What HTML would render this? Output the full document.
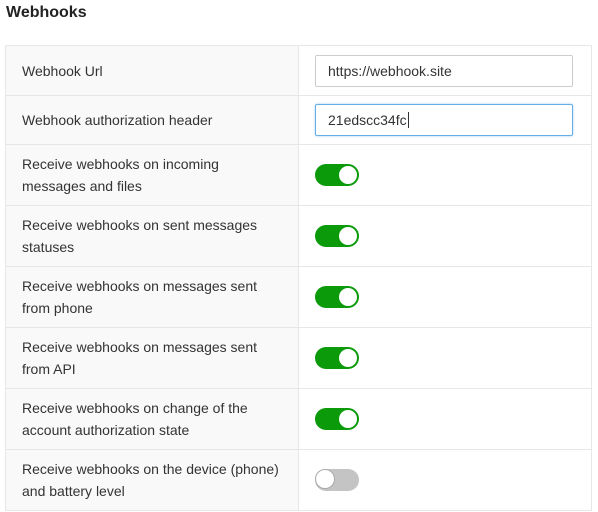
<!DOCTYPE html>
<html><head><style>
body{margin:0;background:#fff;font-family:"Liberation Sans",Arial,sans-serif;color:#333;width:598px;height:512px;overflow:hidden;position:relative}
h3{position:absolute;left:6px;top:4px;margin:0;font-size:16px;font-weight:bold;color:#222}
.t{position:absolute;left:5px;top:45px;width:585px;border:1px solid #e7e7e7;border-bottom:none}
.r{display:flex;border-bottom:1px solid #e7e7e7}
.l{width:276px;background:#f9f9f9;border-right:1px solid #e7e7e7;padding:0 0 0 16px;display:flex;align-items:center;font-size:14px;line-height:22px}
.v{flex:1;display:flex;align-items:center;padding-left:16px}
.in{width:244px;height:30px;border:1px solid #ccc;border-radius:2px;font-size:14px;padding-left:12px;line-height:30px;color:#333}
.in.f{border-color:#66afe9;box-shadow:0 0 2px rgba(102,175,233,.6)}
.sw{width:44px;height:22px;border-radius:11px;background:#0a9a0a;position:relative}
.sw::after{content:"";position:absolute;right:2px;top:2px;width:18px;height:18px;border-radius:50%;background:#fff}
.sw.off{background:#c4c4c4}
.sw.off::after{left:0;top:0;width:20px;height:20px;border:1px solid #aaa;box-sizing:border-box}
</style></head><body>
<h3>Webhooks</h3>
<div class="t">
<div class="r" style="height:49px"><div class="l">Webhook Url</div><div class="v"><div class="in">https://webhook.site</div></div></div>
<div class="r" style="height:48px"><div class="l">Webhook authorization header</div><div class="v"><div class="in f">21edscc34fc<span style="border-left:1px solid #333;margin-left:1px"></span></div></div></div>
<div class="r" style="height:60px"><div class="l">Receive webhooks on incoming<br>messages and files</div><div class="v"><div class="sw"></div></div></div>
<div class="r" style="height:60px"><div class="l">Receive webhooks on sent messages<br>statuses</div><div class="v"><div class="sw"></div></div></div>
<div class="r" style="height:60px"><div class="l">Receive webhooks on messages sent<br>from phone</div><div class="v"><div class="sw"></div></div></div>
<div class="r" style="height:60px"><div class="l">Receive webhooks on messages sent<br>from API</div><div class="v"><div class="sw"></div></div></div>
<div class="r" style="height:60px"><div class="l">Receive webhooks on change of the<br>account authorization state</div><div class="v"><div class="sw"></div></div></div>
<div class="r" style="height:60px"><div class="l">Receive webhooks on the device (phone)<br>and battery level</div><div class="v"><div class="sw off"></div></div></div>
</div>
</body></html>
